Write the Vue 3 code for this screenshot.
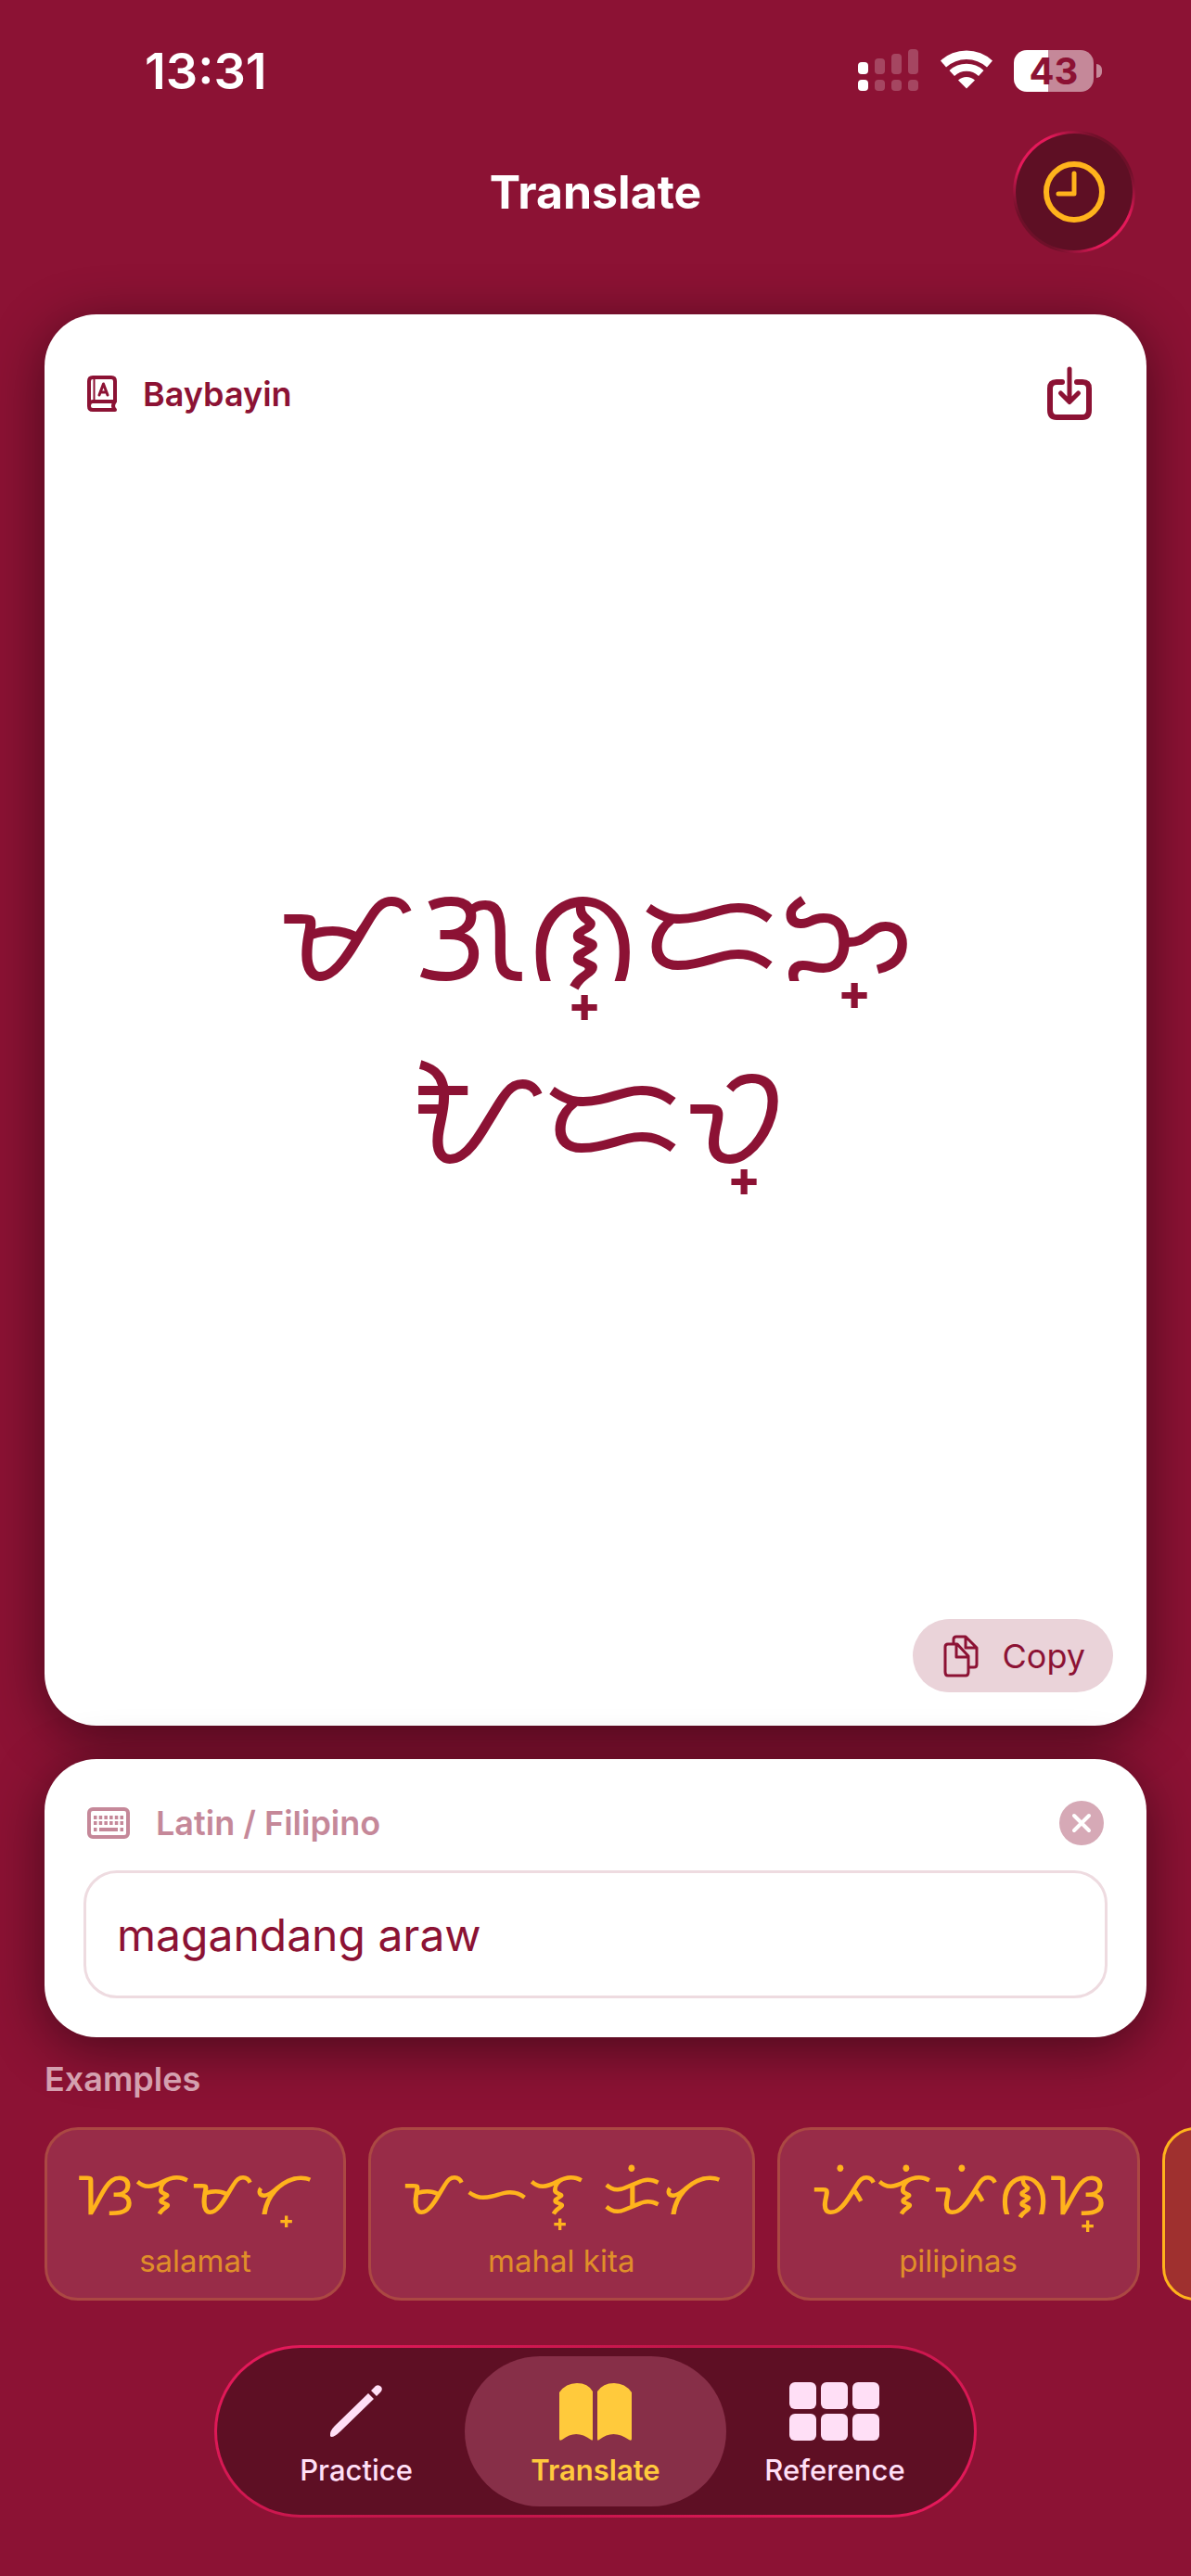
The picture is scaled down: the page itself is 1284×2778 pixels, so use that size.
<template>
  <div class="screen">
    <div class="status-bar">
      <time class="clock">13:31</time>
      <div class="indicators">
        <svg class="signal" viewBox="0 0 66 46" aria-label="Signal">
          <rect x="0" y="14" width="11" height="13" rx="4" />
          <rect x="0" y="33" width="11" height="12" rx="4" />
          <g opacity="0.22">
            <rect x="18" y="10" width="11" height="17" rx="4" />
            <rect x="36" y="5" width="11" height="22" rx="4" />
            <rect x="54" y="0" width="11" height="27" rx="4" />
            <rect x="18" y="33" width="11" height="12" rx="4" />
            <rect x="36" y="33" width="11" height="12" rx="4" />
            <rect x="54" y="33" width="11" height="12" rx="4" />
          </g>
        </svg>
        <svg class="wifi" viewBox="0 0 58 46" aria-label="Wi-Fi">
          <path d="M1 12.500A41 41 0 0 1 57 12.500L51 19.500A33 33 0 0 0 7 19.500Z" />
          <path d="M10.500 23A27 27 0 0 1 47.500 23L42 29A19 19 0 0 0 16 29Z" />
          <path d="M20 33.500A13 13 0 0 1 38 33.500L29 42.500Z" />
        </svg>
        <div class="battery"><span class="level">43</span></div>
      </div>
    </div>

    <header class="top">
      <h1>Translate</h1>
      <button class="history" type="button" aria-label="History">
        <svg viewBox="0 0 66 66">
          <circle cx="33" cy="33" r="30" stroke-width="6" />
          <path d="M33 13V35H16" stroke-width="5" />
        </svg>
      </button>
    </header>

    <main>
      <section class="card output">
        <div class="card-head">
          <svg class="book" viewBox="0 0 32 40">
            <path d="M30 28V6Q30 2 26 2H6Q2 2 2 6V33Q2 37 6 37H30Q26 33 30 28H6Q2 28 2 33" stroke-width="4" />
            <path d="M7.500 3V27" stroke-width="2" />
            <path d="M13 21L17.500 9L22 21M14.500 18H20.500" stroke-width="3" />
          </svg>
          <h2>Baybayin</h2>
          <button class="save" type="button" aria-label="Save">
            <svg viewBox="0 0 50 60">
              <path d="M17 17H11Q4 17 4 24V47Q4 55 11 55H39Q46 55 46 47V24Q46 17 39 17H33" stroke-width="6" />
              <path d="M25 3V36M15.500 29L25 38.500L34.500 29" stroke-width="5" />
            </svg>
          </button>
        </div>
        <p class="result" lang="fil-Tglg">{{ result }}</p>
        <button class="copy" type="button">
          <svg viewBox="0 0 36 46">
            <path d="M10 10V5Q10 2 13 2H23L35 14V32Q35 35 32 35H27M23 2V14H35" />
            <path d="M4 10H14L26 23V40Q26 44 23 44H4Q1 44 1 40V13Q1 10 4 10ZM13 10V24H26" />
          </svg>
          <span>Copy</span>
        </button>
      </section>

      <section class="card source">
        <div class="card-head">
          <svg class="keyboard" viewBox="0 0 46 34">
            <rect x="2" y="2" width="42" height="30" rx="4" fill="none" stroke-width="4" />
            <path d="M7 11H39M7 17H39" stroke-width="4" stroke-dasharray="3.500 2.200" />
            <path d="M7 24H10.500M13 24H33M35.500 24H39" stroke-width="4" />
          </svg>
          <label for="latin">Latin / Filipino</label>
          <button class="clear" type="button" aria-label="Clear" @click="text = ''">
            <svg viewBox="0 0 48 48"><path d="M16 16L32 32M32 16L16 32" /></svg>
          </button>
        </div>
        <input id="latin" v-model="text" type="text" />
      </section>

      <section class="examples">
        <h2>Examples</h2>
        <div class="chips">
          <button
            v-for="item in examples"
            :key="item.latin"
            type="button"
            :class="['chip', { active: item.latin === text }]"
            @click="text = item.latin"
          >
            <span class="script" lang="fil-Tglg">{{ item.script }}</span>
            <span class="latin">{{ item.latin }}</span>
          </button>
        </div>
      </section>
    </main>

    <nav class="tabs">
      <a href="#practice">
        <svg viewBox="0 0 98 66">
          <path d="M21 59Q20 54 26 48L62 13L68 19L32 54Q26 60 22 60ZM65 10L70 5Q73 3 76 6Q78 9 75 12L71 16Z" />
        </svg>
        Practice
      </a>
      <a href="#translate" class="active" aria-current="page">
        <svg viewBox="0 0 98 66">
          <path d="M10 12Q17 2 29 2Q41 2 46 11V62Q46 65 44 63Q28 51 13 63Q10 65 10 62ZM51 11Q57 2 69 2Q81 2 88 12V62Q88 65 85 63Q68 51 53 63Q51 65 51 62Z" />
        </svg>
        Translate
      </a>
      <a href="#reference">
        <svg viewBox="0 0 98 66">
          <rect v-for="n in 6" :key="n" :x="((n - 1) % 3) * 34" :y="n > 3 ? 35 : 1" width="29" height="29" rx="6" />
        </svg>
        Reference
      </a>
    </nav>
  </div>
</template>

<script setup>
import { ref, computed } from 'vue'

const examples = [
  { latin: 'salamat', script: 'ᜐᜎᜋᜆ᜔' },
  { latin: 'mahal kita', script: 'ᜋᜑᜎ᜔ ᜃᜒᜆ' },
  { latin: 'pilipinas', script: 'ᜉᜒᜎᜒᜉᜒᜈᜐ᜔' },
  { latin: 'magandang araw', script: 'ᜋᜄᜈ᜔ᜇᜅ᜔ ᜀᜇᜏ᜔' }
]

const text = ref('magandang araw')

const result = computed(() => {
  const match = examples.find((item) => item.latin === text.value)
  return match ? match.script : ''
})
</script>

<style>
body {
  background: #8c1234;
}
</style>

<style scoped>
.screen {
  box-sizing: border-box;
  min-height: 100vh;
  display: flex;
  flex-direction: column;
  overflow: hidden;
  background: #8c1234;
  font-family: Inter, "Noto Sans", sans-serif;
  color: #fff;
}
h1,
h2,
p {
  margin: 0;
}
button {
  padding: 0;
  border: none;
  background: none;
  color: inherit;
  font: inherit;
}
svg {
  flex: none;
  fill: none;
}
.status-bar {
  display: flex;
  align-items: center;
  justify-content: space-between;
  height: 60px;
  padding: 46px 96px 0 156px;
}
.clock {
  font-size: 54px;
  font-weight: 600;
}
.indicators {
  display: flex;
  align-items: center;
}
.signal {
  width: 66px;
  height: 46px;
  margin-right: 22px;
  fill: #fff;
}
.wifi {
  width: 58px;
  height: 46px;
  margin-right: 22px;
  fill: #fff;
}
.battery {
  position: relative;
  width: 86px;
  height: 45px;
  margin-right: 9px;
  border-radius: 14px;
  background: linear-gradient(90deg, #fff 43%, #c58899 43%);
  color: #8c1234;
  font-size: 40px;
  font-weight: 700;
  line-height: 45px;
  text-align: center;
}
.battery::after {
  content: "";
  position: absolute;
  top: 15px;
  right: -9px;
  width: 6px;
  height: 15px;
  border-radius: 0 8px 8px 0;
  background: #c58899;
}
.top {
  display: grid;
  grid-template-columns: 132px 1fr 132px;
  align-items: center;
  padding: 35px 60px 66px;
}
.top h1 {
  grid-column: 2;
  font-size: 50px;
  font-weight: 700;
  text-align: center;
}
.history {
  display: flex;
  align-items: center;
  justify-content: center;
  width: 132px;
  height: 132px;
  border: 3px solid transparent;
  border-radius: 50%;
  background:
    linear-gradient(#5e0f24, #5e0f24) padding-box,
    linear-gradient(45deg, #6e1029 18%, #e5195a 38%, #e5195a 62%, #6e1029 82%) border-box;
}
.history svg {
  width: 66px;
  height: 66px;
  stroke: #ffb31c;
  stroke-linecap: round;
  stroke-linejoin: round;
}
main {
  flex: 1;
  display: flex;
  flex-direction: column;
  padding: 0 48px;
}
.card {
  display: flex;
  flex-direction: column;
  border-radius: 56px;
  background: #fff;
  color: #8c1234;
  box-shadow: 0 12px 60px rgba(0, 0, 0, 0.48);
}
.card-head {
  display: flex;
  align-items: center;
  font-size: 36px;
  font-weight: 600;
}
.card-head h2,
.examples h2 {
  font-size: 36px;
  font-weight: 600;
}
.card-head button {
  margin-left: auto;
}
.output {
  flex: 1;
  padding: 54px 36px 36px;
}
.output .card-head {
  height: 64px;
  padding: 0 22px 0 10px;
}
.book {
  width: 32px;
  height: 40px;
  margin-right: 28px;
  stroke: #8c1234;
  stroke-linecap: round;
  stroke-linejoin: round;
}
.save svg {
  display: block;
  width: 50px;
  height: 60px;
  stroke: #8c1234;
  stroke-linecap: round;
  stroke-linejoin: round;
}
.result {
  flex: 1;
  display: flex;
  align-items: center;
  justify-content: center;
  max-width: 720px;
  margin: 0 auto;
  padding-top: 4px;
  font-size: 144px;
  line-height: 197px;
  text-align: center;
}
.copy {
  align-self: flex-end;
  display: flex;
  align-items: center;
  justify-content: space-between;
  box-sizing: border-box;
  width: 216px;
  height: 79px;
  padding: 0 30px 0 34px;
  border-radius: 40px;
  background: #ead3d9;
  font-size: 36px;
}
.copy svg {
  width: 36px;
  height: 46px;
  overflow: visible;
  stroke: #8c1234;
  stroke-width: 3;
  stroke-linejoin: round;
}
.source {
  margin-top: 36px;
  padding: 42px 42px;
}
.source .card-head {
  height: 54px;
  margin-bottom: 24px;
  padding: 0 4px;
  color: #c58899;
}
.keyboard {
  width: 46px;
  height: 34px;
  margin-right: 28px;
  stroke: #c58899;
}
.clear svg {
  display: block;
  width: 48px;
  height: 48px;
  border-radius: 50%;
  background: #d6a9b6;
  stroke: #fff;
  stroke-width: 4;
  stroke-linecap: round;
}
.source input {
  box-sizing: border-box;
  width: 100%;
  height: 138px;
  padding: 0 33px;
  border: 3px solid #eedbe0;
  border-radius: 36px;
  outline: none;
  background: #fff;
  color: #8c1234;
  font-family: inherit;
  font-size: 48px;
}
.examples h2 {
  margin: 23px 0 30px;
  color: #d4a0af;
  line-height: 44px;
}
.chips {
  display: flex;
  gap: 24px;
  margin-right: -48px;
  overflow-x: auto;
  scrollbar-width: none;
}
.chip {
  flex: none;
  display: flex;
  flex-direction: column;
  align-items: center;
  box-sizing: border-box;
  height: 187px;
  padding: 25px 33px 20px;
  border: 3px solid #ab4843;
  border-radius: 36px;
  background: #982c48;
}
.chip.active {
  border-color: #ffb31c;
  background: #9f302f;
}
.script {
  height: 96px;
  color: #ffb31c;
  font-size: 66px;
  line-height: 84px;
}
.latin {
  color: #e08f29;
  font-size: 33px;
  line-height: 40px;
}
.tabs {
  display: grid;
  grid-template-columns: repeat(3, 1fr);
  align-self: center;
  box-sizing: border-box;
  width: 64%;
  height: 186px;
  margin: 48px 0 63px;
  padding: 9px 21px;
  border: 3px solid transparent;
  border-radius: 93px;
  background:
    linear-gradient(#5e0f24, #5e0f24) padding-box,
    linear-gradient(150deg, #e5195a 5%, #c2164a 45%, #c2164a 55%, #e5195a 95%) border-box;
}
.tabs a {
  display: flex;
  flex-direction: column;
  align-items: center;
  justify-content: center;
  gap: 12px;
  padding-top: 6px;
  border-radius: 81px;
  color: #ffdff6;
  font-size: 31px;
  font-weight: 500;
  line-height: 36px;
  text-decoration: none;
}
.tabs svg {
  width: 98px;
  height: 66px;
  fill: currentColor;
}
.tabs .active {
  margin: 0 -12px;
  background: #872f48;
  color: #ffca3c;
  font-weight: 600;
}
</style>
